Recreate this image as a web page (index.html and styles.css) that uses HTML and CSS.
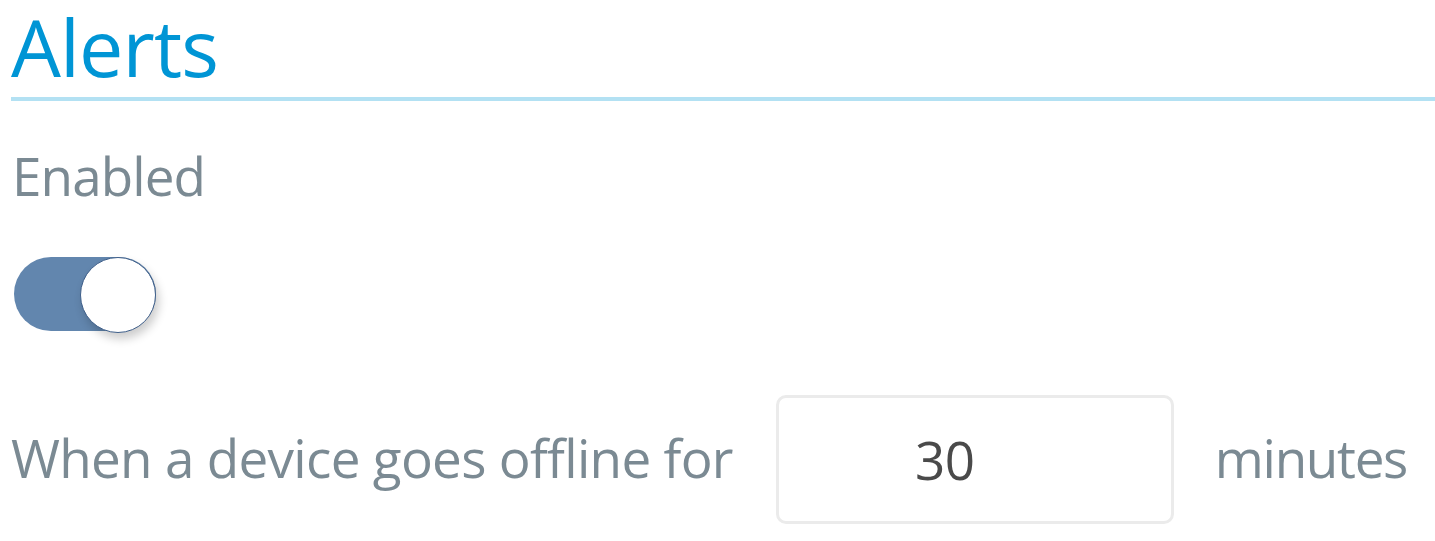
FILE: index.html
```html
<!DOCTYPE html>
<html lang="en">
<head>
    <meta charset="UTF-8">
    <meta name="viewport" content="width=device-width, initial-scale=1.0">
    <title>Alerts</title>
    <link rel="stylesheet" href="styles.css">
</head>
<body>
    <section class="settings">
        <header class="section-header">
            <h1>Alerts</h1>
        </header>

        <div class="form-group">
            <label class="field-label" for="alerts-enabled">Enabled</label>
            <label class="switch">
                <input type="checkbox" id="alerts-enabled" checked>
                <span class="switch-track"></span>
            </label>
        </div>

        <div class="offline-row">
            <label class="offline-label" for="offline-minutes">When a device goes offline for</label>
            <input type="text" id="offline-minutes" class="input-field" value="30">
            <span class="unit">minutes</span>
        </div>
    </section>
</body>
</html>
```

FILE: styles.css
```css
:root {
    --primary: #0095d5;
    --primary-light: #b3e1f3;
    --text-light: #7b8a93;
    --text: #4a4a4a;
    --toggle: #6286ae;
    --border: #ebebeb;
}

* {
    box-sizing: border-box;
    margin: 0;
    padding: 0;
}

body {
    font-family: 'Open Sans', sans-serif;
    background: white;
    color: var(--text);
}

.settings {
    padding: 0 0 0 11px;
}

.section-header {
    border-bottom: 4px solid var(--primary-light);
    height: 101px;
}

h1 {
    font-size: 79px;
    font-weight: 400;
    line-height: 1.2;
    color: var(--primary);
    letter-spacing: -0.9px;
}

.form-group {
    padding-top: 40px;
}

.field-label {
    display: block;
    font-size: 53px;
    line-height: 70px;
    letter-spacing: -0.9px;
    color: var(--text-light);
    padding-left: 1px;
}

.switch {
    display: block;
    position: relative;
    width: 142px;
    height: 74px;
    margin: 46px 0 0 3px;
}

.switch input {
    display: none;
}

.switch-track {
    display: block;
    width: 100%;
    height: 100%;
    border-radius: 37px;
    background: var(--toggle);
}

.switch-track::after {
    content: "";
    position: absolute;
    top: 0;
    right: 0;
    width: 74px;
    height: 74px;
    border-radius: 50%;
    background: white;
    border: 1px solid #3f5f8a;
    box-shadow: 3px 6px 10px rgba(0, 0, 0, 0.2);
}

.offline-row {
    display: flex;
    align-items: center;
    margin-top: 64px;
    font-size: 53px;
    letter-spacing: -0.7px;
    color: var(--text-light);
    white-space: nowrap;
}

.offline-label {
    padding-bottom: 4px;
}

.input-field {
    flex-shrink: 0;
    width: 398px;
    height: 129px;
    margin: 0 41px 0 43px;
    padding: 0 60px 0 0;
    border: 3px solid var(--border);
    border-radius: 10px;
    font-family: inherit;
    font-size: 53px;
    letter-spacing: -0.5px;
    color: var(--text);
    text-align: center;
    outline: none;
}

.unit {
    padding-bottom: 4px;
    letter-spacing: -1.3px;
}
```
